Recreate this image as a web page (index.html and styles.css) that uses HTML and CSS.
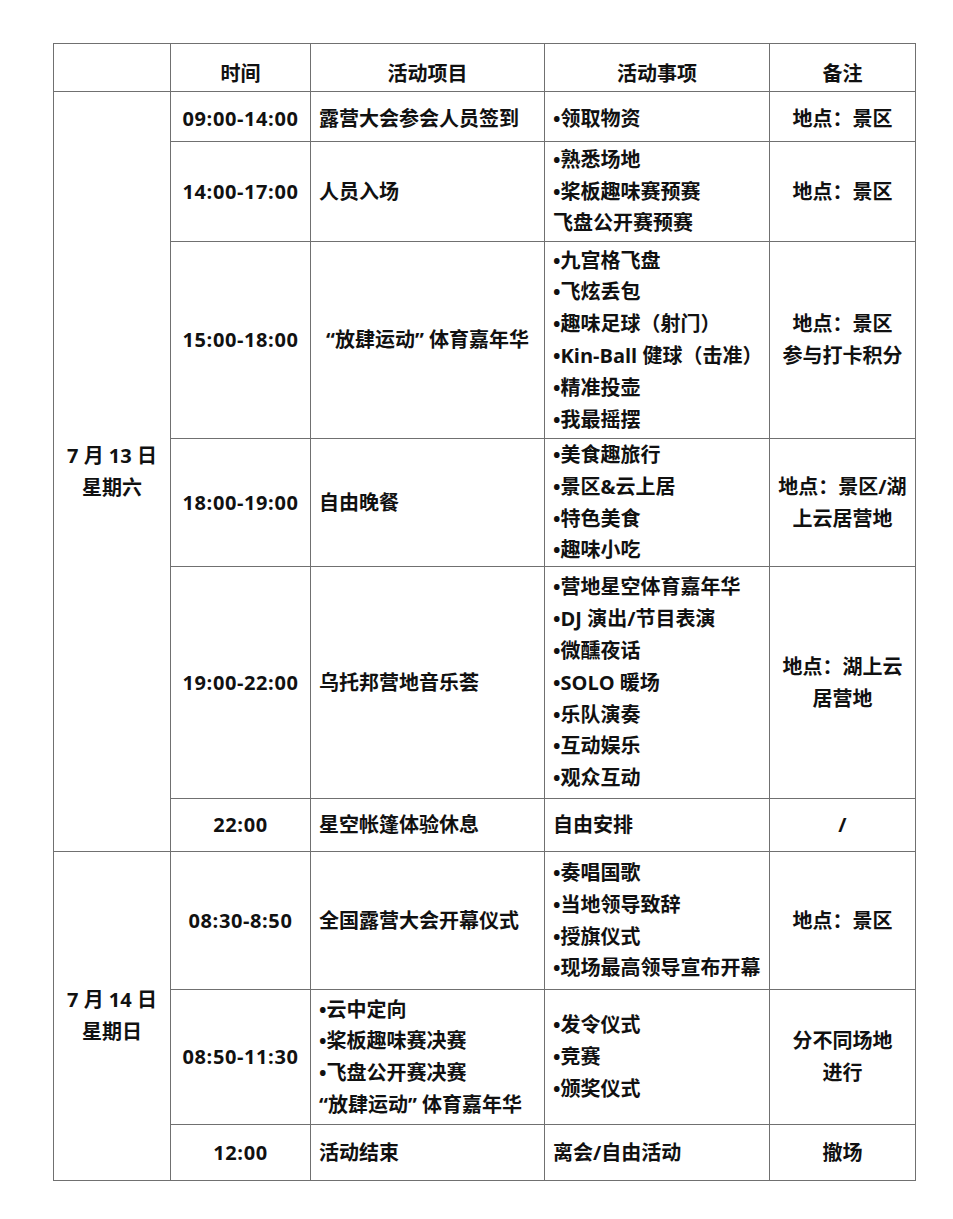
FILE: index.html
```html
<!DOCTYPE html>
<html lang="zh-CN">
<head>
<meta charset="utf-8">
<title>活动日程</title>
<link rel="stylesheet" href="styles.css">
</head>
<body>
<table class="schedule">
  <colgroup>
    <col class="c-day"><col class="c-time"><col class="c-item"><col class="c-detail"><col class="c-note">
  </colgroup>
  <tr class="h-head">
    <th></th><th>时间</th><th>活动项目</th><th>活动事项</th><th>备注</th>
  </tr>
  <tr class="h-r1">
    <td class="day" rowspan="6">7 月 13 日<br>星期六</td>
    <td class="time">09:00-14:00</td>
    <td class="item">露营大会参会人员签到</td>
    <td class="detail">•领取物资</td>
    <td class="note">地点：景区</td>
  </tr>
  <tr class="h-r2">
    <td class="time">14:00-17:00</td>
    <td class="item">人员入场</td>
    <td class="detail">•熟悉场地<br>•桨板趣味赛预赛<br>飞盘公开赛预赛</td>
    <td class="note">地点：景区</td>
  </tr>
  <tr class="h-r3">
    <td class="time">15:00-18:00</td>
    <td class="item center">“放肆运动” 体育嘉年华</td>
    <td class="detail">•九宫格飞盘<br>•飞炫丢包<br>•趣味足球（射门）<br>•Kin-Ball 健球（击准）<br>•精准投壶<br>•我最摇摆</td>
    <td class="note">地点：景区<br>参与打卡积分</td>
  </tr>
  <tr class="h-r4">
    <td class="time">18:00-19:00</td>
    <td class="item">自由晚餐</td>
    <td class="detail">•美食趣旅行<br>•景区&amp;云上居<br>•特色美食<br>•趣味小吃</td>
    <td class="note">地点：景区/湖<br>上云居营地</td>
  </tr>
  <tr class="h-r5">
    <td class="time">19:00-22:00</td>
    <td class="item">乌托邦营地音乐荟</td>
    <td class="detail">•营地星空体育嘉年华<br>•DJ 演出/节目表演<br>•微醺夜话<br>•SOLO 暖场<br>•乐队演奏<br>•互动娱乐<br>•观众互动</td>
    <td class="note">地点：湖上云<br>居营地</td>
  </tr>
  <tr class="h-r6">
    <td class="time">22:00</td>
    <td class="item">星空帐篷体验休息</td>
    <td class="detail">自由安排</td>
    <td class="note">/</td>
  </tr>
  <tr class="h-r7">
    <td class="day" rowspan="3">7 月 14 日<br>星期日</td>
    <td class="time">08:30-8:50</td>
    <td class="item">全国露营大会开幕仪式</td>
    <td class="detail">•奏唱国歌<br>•当地领导致辞<br>•授旗仪式<br>•现场最高领导宣布开幕</td>
    <td class="note">地点：景区</td>
  </tr>
  <tr class="h-r8">
    <td class="time">08:50-11:30</td>
    <td class="item">•云中定向<br>•桨板趣味赛决赛<br>•飞盘公开赛决赛<br>“放肆运动” 体育嘉年华</td>
    <td class="detail">•发令仪式<br>•竞赛<br>•颁奖仪式</td>
    <td class="note">分不同场地<br>进行</td>
  </tr>
  <tr class="h-r9">
    <td class="time">12:00</td>
    <td class="item">活动结束</td>
    <td class="detail">离会/自由活动</td>
    <td class="note">撤场</td>
  </tr>
</table>
</body>
</html>
```
FILE: styles.css
```css
html, body {
  margin: 0;
  padding: 0;
  background: #ffffff;
}
body {
  padding: 43px 0 0 53px;
  font-family: "Open Sans", "Noto Sans CJK SC", sans-serif;
  font-weight: 700;
  font-size: 20px;
  color: #111111;
}
.schedule {
  border-collapse: collapse;
  table-layout: fixed;
  width: 862px;
}
.c-day { width: 117px; }
.c-time { width: 140px; }
.c-item { width: 234px; }
.c-detail { width: 225px; }
.c-note { width: 146px; }
.schedule th,
.schedule td {
  border: 1px solid #707070;
  padding: 0 8px;
  line-height: 31.8px;
  vertical-align: middle;
  white-space: nowrap;
  overflow: hidden;
}
.schedule th {
  font-weight: 700;
  text-align: center;
  padding-top: 12px;
}
.day, .time, .note, .center {
  text-align: center;
}
.time {
  letter-spacing: 0.6px;
}
.item, .detail {
  text-align: left;
}
.item.center {
  text-align: center;
  padding: 0 2px;
}
.h-r1 td {
  padding-top: 4px;
}
.h-r1 td.day {
  padding-top: 0;
}
.h-head { height: 48px; }
.h-r1 { height: 50px; }
.h-r2 { height: 100px; }
.h-r3 { height: 197px; }
.h-r4 { height: 128px; }
.h-r5 { height: 232px; }
.h-r6 { height: 53px; }
.h-r7 { height: 138px; }
.h-r8 { height: 135px; }
.h-r9 { height: 56px; }
```
